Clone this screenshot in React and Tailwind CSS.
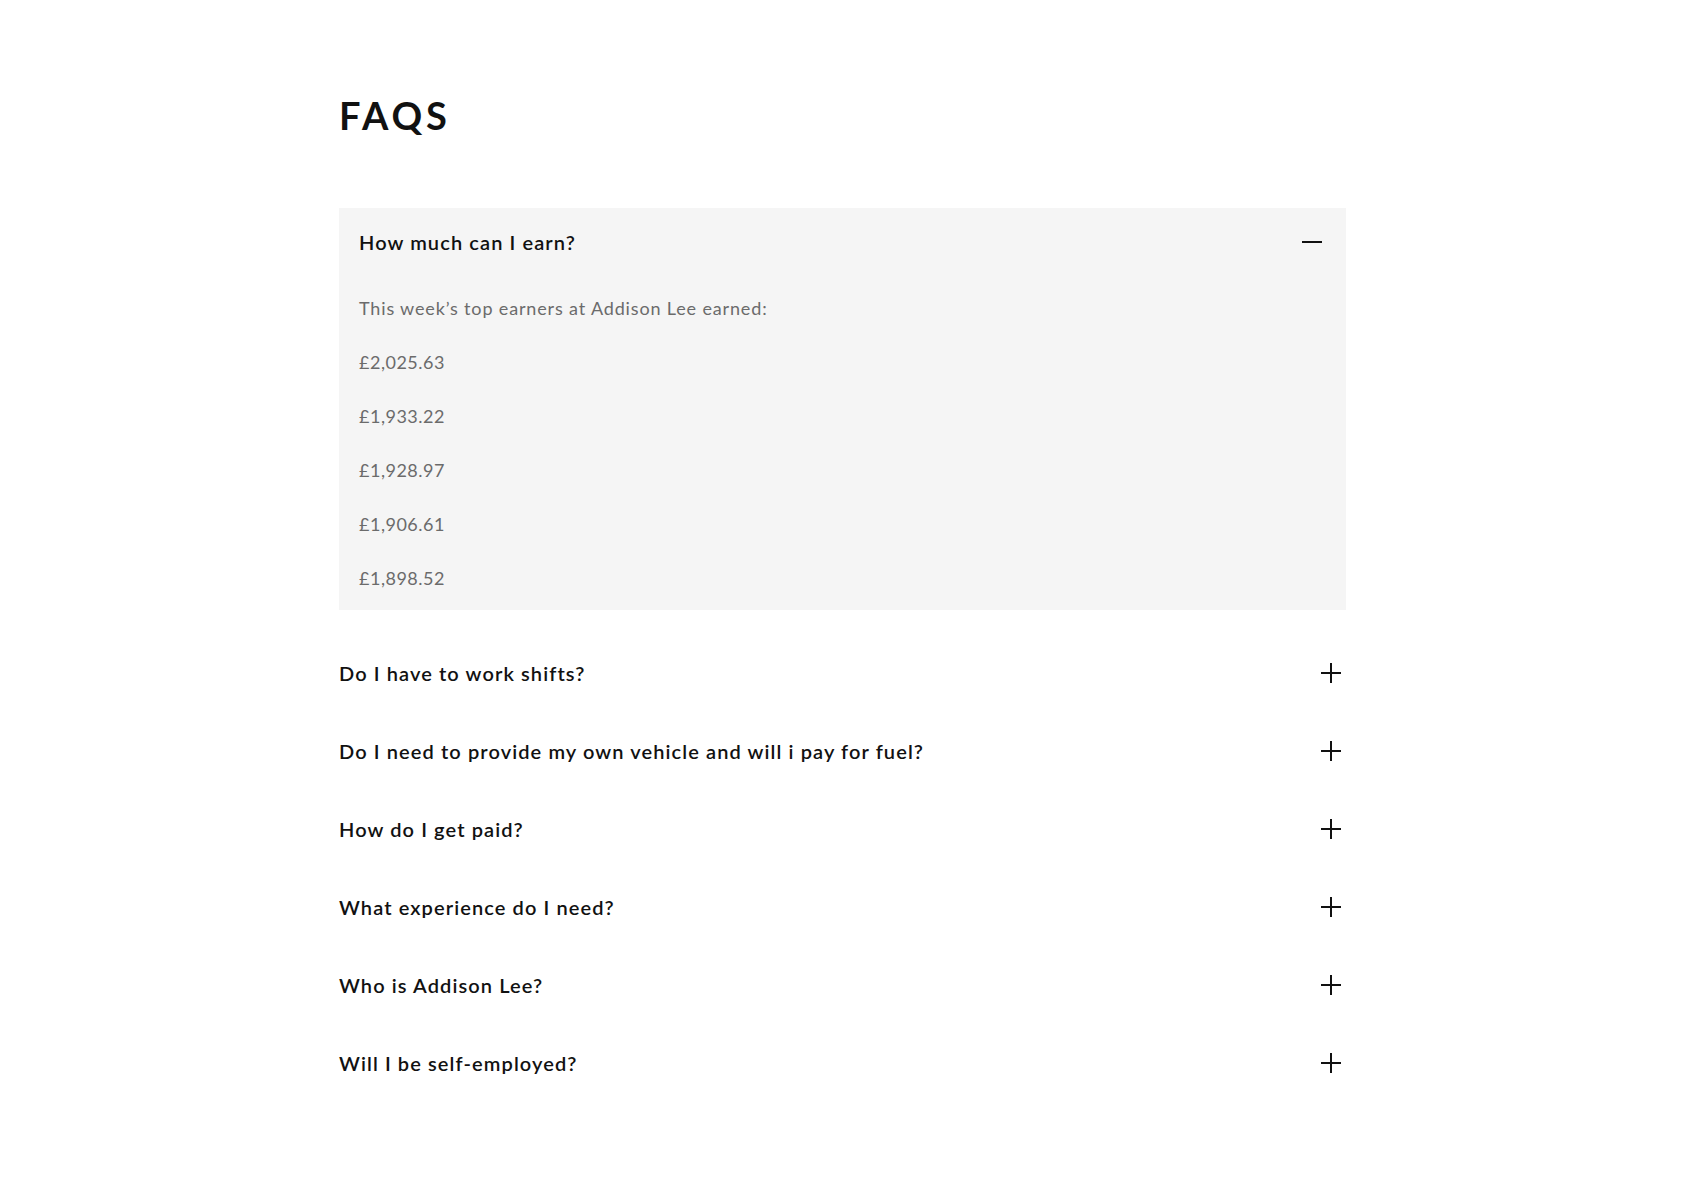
import React from "react";

const font = { fontFamily: "Lato, 'Open Sans', sans-serif" };

function Plus() {
  return (
    <svg width="24" height="24" viewBox="0 0 24 24" className="shrink-0">
      <path d="M2 12h20M12 2v20" stroke="#111" strokeWidth="2" fill="none" />
    </svg>
  );
}

function Minus() {
  return (
    <svg width="24" height="24" viewBox="0 0 24 24" className="shrink-0">
      <path d="M2 12h20" stroke="#111" strokeWidth="2" fill="none" />
    </svg>
  );
}

const questions = [
  "Do I have to work shifts?",
  "Do I need to provide my own vehicle and will i pay for fuel?",
  "How do I get paid?",
  "What experience do I need?",
  "Who is Addison Lee?",
  "Will I be self-employed?",
];

const amounts = ["£2,025.63", "£1,933.22", "£1,928.97", "£1,906.61", "£1,898.52"];

export default function App() {
  return (
    <div className="min-h-[1202px] bg-white" style={font}>
      <div className="ml-[339px] w-[1007px] pt-[96px]">
        <h1 className="text-[38px] leading-[38px] font-bold tracking-[0.1em] text-[#111]">FAQS</h1>
        <div className="mt-[74px] bg-[#f5f5f5] pt-[20px] pb-[18px] pl-[20px] pr-[22px]">
          <div className="flex items-center justify-between">
            <span className="text-[20px] leading-[28px] font-semibold tracking-[1.1px] text-[#111]">How much can I earn?</span>
            <Minus />
          </div>
          <div className="mt-[38px] flex flex-col gap-[26px] text-[18px] leading-[28px] text-[#6b6b6b]">
            <p className="tracking-[0.85px]">This week’s top earners at Addison Lee earned:</p>
            {amounts.map((a) => (
              <p key={a} className="tracking-[0.5px]">{a}</p>
            ))}
          </div>
        </div>
        <div className="mt-[24px] flex flex-col">
          {questions.map((q) => (
            <div key={q} className="flex items-center justify-between py-[25px] pr-[3px]">
              <span className="text-[20px] leading-[28px] font-semibold tracking-[1.1px] text-[#111]">{q}</span>
              <Plus />
            </div>
          ))}
        </div>
      </div>
    </div>
  );
}
